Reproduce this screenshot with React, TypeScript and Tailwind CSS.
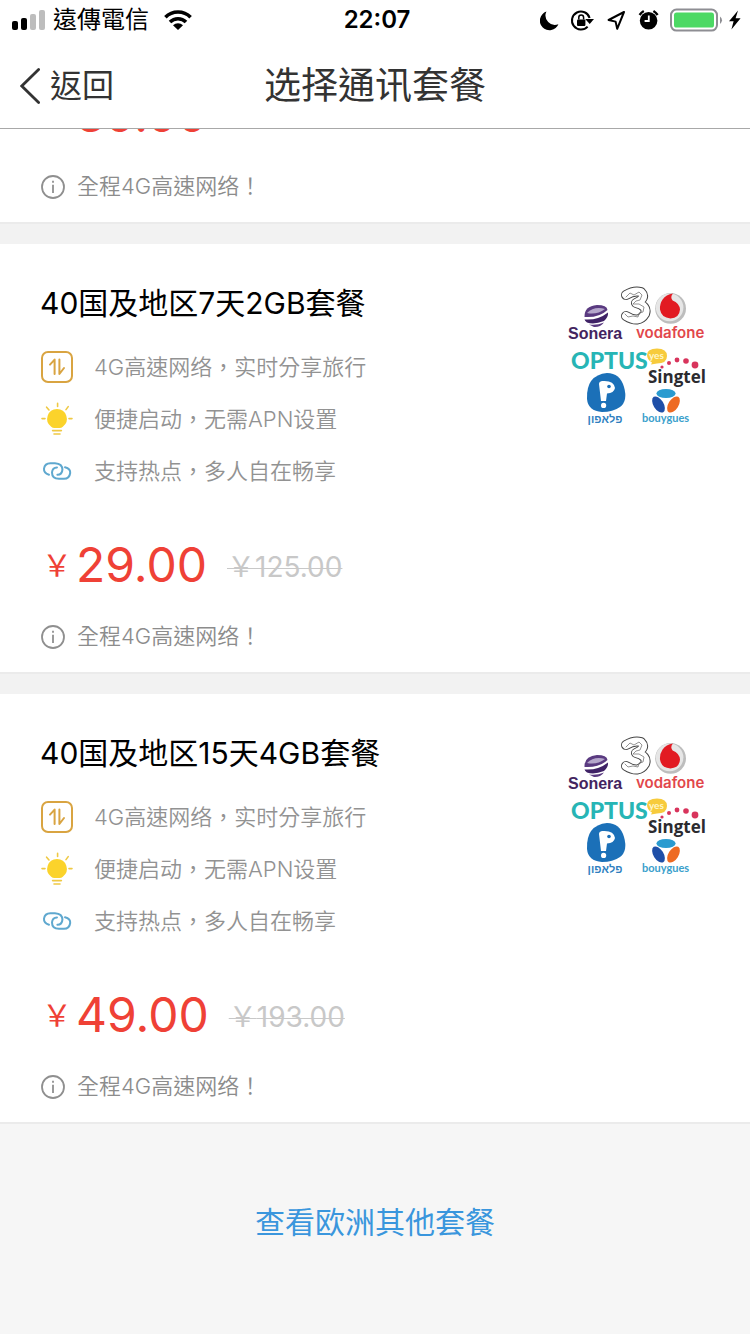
import React from "react";

type Plan = { title: string; price: string; original: string };

const plans: Plan[] = [
  { title: "40国及地区7天2GB套餐", price: "29.00", original: "125.00" },
  { title: "40国及地区15天4GB套餐", price: "49.00", original: "193.00" },
];

function Signal() {
  return (
    <svg width="34" height="22" viewBox="0 0 34 22" aria-hidden="true">
      <rect x="0" y="12" width="6" height="9" rx="2" fill="#000" />
      <rect x="9" y="9" width="6" height="12" rx="2" fill="#000" />
      <rect x="18" y="5" width="6" height="16" rx="2" fill="#bdbdbd" />
      <rect x="27" y="1" width="6" height="20" rx="2" fill="#bdbdbd" />
    </svg>
  );
}

function Wifi() {
  return (
    <svg width="28" height="20" viewBox="0 0 28 20" aria-hidden="true">
      <g fill="none" stroke="#000" strokeWidth="3.6">
        <path d="M1.4 7.2 A18 18 0 0 1 26.6 7.2" />
        <path d="M6 12 A11.4 11.4 0 0 1 22 12" />
      </g>
      <path d="M9 15.2 A7.2 7.2 0 0 1 19 15.2 L14 20 Z" fill="#000" />
    </svg>
  );
}

function StatusIcons() {
  return (
    <svg width="202" height="26" viewBox="0 0 202 26" aria-hidden="true">
      {/* do not disturb */}
      <path d="M6.4 4.6 A9.6 9.6 0 1 0 18.4 17.2 A9.4 9.4 0 0 1 6.4 4.6 Z" fill="#000" />
      {/* rotation lock */}
      <path d="M47.6 19.6 A9 9 0 1 1 49.6 11" fill="none" stroke="#000" strokeWidth="2" />
      <path d="M45.2 12 H54 L49.7 17 Z" fill="#000" />
      <rect x="37" y="12.4" width="8.4" height="6.6" rx="1" fill="#000" />
      <path d="M38.8 12.6 V10.4 a2.4 2.4 0 0 1 4.8 0 V12.6" fill="none" stroke="#000" strokeWidth="1.5" />
      {/* location */}
      <path d="M84 5 L68.6 13 L75.6 14.6 L77.2 21.8 Z" fill="none" stroke="#000" strokeWidth="2" strokeLinejoin="round" />
      {/* alarm */}
      <circle cx="108.6" cy="13.8" r="8.8" fill="#000" />
      <path d="M108.8 8.4 V14 H104.6" fill="none" stroke="#fff" strokeWidth="1.8" />
      <path d="M99.6 8 A13 13 0 0 1 103.8 4 M113.4 4 A13 13 0 0 1 117.6 8" fill="none" stroke="#000" strokeWidth="2.4" />
      {/* battery */}
      <rect x="131" y="2.6" width="46" height="21" rx="5.5" fill="#fff" stroke="#8e8e93" strokeWidth="2" />
      <rect x="134" y="5.6" width="40" height="15" rx="2.6" fill="#4cd964" />
      <path d="M180 9.4 a4.6 4.6 0 0 1 0 7.6 Z" fill="#8e8e93" />
      <path d="M198 3.6 L189 14.2 H193.6 L191.4 22.4 L200.6 11.2 H195.6 Z" fill="#000" />
    </svg>
  );
}

function DataIcon() {
  return (
    <svg width="34" height="34" viewBox="0 0 34 34" fill="none" stroke="#d9a441" strokeWidth="2" strokeLinecap="round" strokeLinejoin="round" aria-hidden="true">
      <rect x="2" y="2" width="30" height="30" rx="6" />
      <path d="M10 14.6 L14.6 9.6 V24" />
      <path d="M19.4 9.6 V24 L24 18" />
    </svg>
  );
}

function BulbIcon() {
  return (
    <svg width="34" height="34" viewBox="0 0 34 34" aria-hidden="true">
      <path d="M17 7 a9.8 9.8 0 0 1 5.8 17.7 q-1.4 1.3 -3.2 1.3 h-5.2 q-1.8 0 -3.2 -1.3 A9.8 9.8 0 0 1 17 7 Z" fill="#fbd32b" />
      <g stroke="#efc944" strokeWidth="1.6" strokeLinecap="round">
        <path d="M17.6 1.4 V4.4 M6.6 5.2 L9 8 M28.2 4.6 L26 7.6 M2 16.6 H5 M29 16.6 H32" />
        <path d="M12.6 28.6 H21.4 M14 32 H20" />
      </g>
    </svg>
  );
}

function LinkIcon() {
  return (
    <svg width="34" height="34" viewBox="0 0 34 34" fill="none" stroke="#5fa8cf" strokeWidth="2" strokeLinecap="round" aria-hidden="true">
      <path d="M9 20.8 Q3.6 19 4 14.6 Q4.8 9.2 10.4 9.2 H15 Q22.4 9.6 22.4 15.6 Q22.2 20.6 17.4 20.8" />
      <path d="M25 13.2 Q30.6 14.6 30.2 19 Q29.4 24.8 24 24.8 H19 Q12 24.6 12 18.4 Q12.4 13.6 17 13.4" />
    </svg>
  );
}

function InfoIcon() {
  return (
    <svg width="26" height="26" viewBox="0 0 26 26" fill="none" stroke="#8f8f8f" strokeWidth="1.8" aria-hidden="true">
      <circle cx="13" cy="13" r="11" />
      <path d="M13 10.8 V19" />
      <path d="M13 6.8 V8.8" />
    </svg>
  );
}

function Carriers() {
  return (
    <svg className="mt-[41px] shrink-0" width="140" height="144" viewBox="0 0 140 144" role="img" aria-label="运营商">
      {/* Sonera */}
      <g>
        <path d="M18.5 32 Q18 21 31 20 Q41 20 41.5 25 Q33 33 18.5 32 Z" fill="#5a3a80" />
        <path d="M18.5 34.500 Q32 35.500 42 27.500 Q42.500 32 38 36 Q28 40 21 37.500 Q19 36 18.500 34.500 Z" fill="#3f2266" />
        <path d="M23 39.500 Q31 40.500 38 37.500 Q34 42.500 28 42 Z" fill="#5a3a80" />
        <path d="M21 28 Q28 21 39 24 Q31 30 21 28 Z" fill="#b5a7cb" />
        <text x="2" y="54" fontSize="16" fontWeight="700" fill="#43245f" className="font-['Liberation_Sans',sans-serif]">Sonera</text>
      </g>
      {/* Three */}
      <g fill="none" strokeLinecap="round" strokeLinejoin="round">
        <path d="M60 10 Q68 5 75 7 Q81 13 70 18 Q82 21 79 29 Q73 39 60 31" stroke="#444" strokeWidth="10" />
        <path d="M60 10 Q68 5 75 7 Q81 13 70 18 Q82 21 79 29 Q73 39 60 31" stroke="#fff" strokeWidth="8" />
        <path d="M60 12 l4 -4 l4 2 l5 -3 l3 3 l-2 5 l-4 1 l-3 3 l6 0 l5 3 l-1 5 l-4 1 l-1 4 l-5 -1 l-5 1 l-3 -3" stroke="#777" strokeWidth="0.8" />
      </g>
      {/* Vodafone */}
      <g>
        <circle cx="104.6" cy="23.4" r="15.4" fill="#bdbdbd" />
        <circle cx="103.6" cy="22.4" r="13.8" fill="#e6e6e6" />
        <path d="M107 8.5 Q100 9.6 96.6 14.6 Q93.6 19 94 24.6 Q95.4 33 104.4 33.4 Q113.4 33 114 24.4 Q113.4 18 106.6 15.4 Q103.8 12 107 8.5 Z" fill="#e21a22" />
        <text x="70" y="53" fontSize="15" fontWeight="600" fill="#e2474b" className="font-[Inter,sans-serif]">vodafone</text>
      </g>
      {/* Optus */}
      <g>
        <text x="5" y="84" fontSize="23" fontWeight="900" fill="#27b5b5" className="font-[Lato,sans-serif]">OPTUS</text>
        <path d="M81 70 Q81 63.5 91 63.5 Q101 63.5 101 71 Q101 78.5 91 78.5 L85 79.5 L86 77.5 Q81 75 81 70 Z" fill="#f7cb3c" />
        <text x="83" y="74" fontSize="10" fontWeight="700" fill="#fff6c8" className="font-[Lato,sans-serif]">yes</text>
      </g>
      {/* Singtel */}
      <g>
        <g fill="#d8345c">
          <circle cx="96" cy="82" r="1.6" />
          <circle cx="103" cy="78" r="2" />
          <circle cx="111" cy="75" r="2.4" />
          <circle cx="120" cy="76" r="2.8" />
          <circle cx="129" cy="80" r="3.4" />
        </g>
        <text x="82" y="98" fontSize="17" fontWeight="700" fill="#2b2b2f" className="font-['Open_Sans',sans-serif]">Singtel</text>
      </g>
      {/* Pelephone */}
      <g>
        <path d="M41 88 Q54 88 58 102 Q62 116 54 122 Q47 127 36 127 Q22 126 21 114 Q20 90 41 88 Z" fill="#1b70b8" />
        <path d="M36 96 Q48 95 49 103 Q48 108 41 108.5 L40 116 H35 L33 99 Q33 96.5 36 96 Z" fill="#fff" />
        <circle cx="43" cy="101.5" r="1.8" fill="#1b70b8" />
        <circle cx="37.6" cy="120.4" r="2.6" fill="#fff" />
        <text x="39" y="138" textAnchor="middle" fontSize="11" fontWeight="700" fill="#2f7fbf" className="font-['Liberation_Sans',sans-serif]">פלאפון</text>
      </g>
      {/* Bouygues */}
      <g>
        <ellipse cx="100" cy="108.5" rx="9.6" ry="4.6" fill="#2a9bd0" />
        <ellipse cx="92.5" cy="119.5" rx="9" ry="5" transform="rotate(58 92.5 119.5)" fill="#1f4fa8" />
        <ellipse cx="107.5" cy="119.5" rx="9" ry="5" transform="rotate(-58 107.5 119.5)" fill="#ee6a22" />
        <text x="76" y="137" fontSize="11" fontWeight="700" fill="#3aa0cc" className="font-[Lato,sans-serif]">bouygues</text>
      </g>
    </svg>
  );
}

function Price({ price, original }: { price: string; original?: string }) {
  return (
    <div className="flex h-[72px] shrink-0 items-center">
      <span className="flex items-center text-[#ef4136]">
        <span className="w-9 pl-[2px] text-[30px] leading-none">￥</span>
        <span className="text-[48px] leading-none">{price}</span>
      </span>
      {original && (
        <del className="ml-5 pt-1 text-[28px] text-[#c8c8c8] decoration-1">￥{original}</del>
      )}
    </div>
  );
}

function Note() {
  return (
    <p className="flex h-[71px] shrink-0 items-center gap-[11px] text-[22px] font-[350] text-[#8c8c8c]">
      <InfoIcon />
      全程4G高速网络！
    </p>
  );
}

function Feature({ icon, children }: { icon: React.ReactNode; children: React.ReactNode }) {
  return (
    <li className="flex h-[52px] items-center gap-5">
      {icon}
      {children}
    </li>
  );
}

function PlanCard({ plan }: { plan: Plan }) {
  return (
    <article className="flex justify-between bg-white pr-11 pl-10">
      <div className="pt-9">
        <h2 className="text-[30px] leading-[46px] text-black">{plan.title}</h2>
        <ul className="mt-[15px] text-[22px] font-[350] text-[#929292]">
          <Feature icon={<DataIcon />}>4G高速网络，实时分享旅行</Feature>
          <Feature icon={<BulbIcon />}>便捷启动，无需APN设置</Feature>
          <Feature icon={<LinkIcon />}>支持热点，多人自在畅享</Feature>
        </ul>
        <div className="mt-8">
          <Price price={plan.price} original={plan.original} />
        </div>
        <Note />
      </div>
      <Carriers />
    </article>
  );
}

export default function App() {
  return (
    <div lang="zh-Hant" className="flex min-h-screen flex-col bg-[#f6f6f6] font-[Inter,'Noto_Sans_CJK_TC',sans-serif]">
      <header className="border-b border-[#a8a8a8] bg-white">
        <div className="grid h-10 grid-cols-[1fr_auto_1fr] items-center pr-2 pl-3">
          <div className="flex items-center gap-[7px] text-2xl text-black">
            <Signal />
            <span>遠傳電信</span>
            <span className="pl-2">
              <Wifi />
            </span>
          </div>
          <time className="text-[24px] font-semibold text-black">22:07</time>
          <div className="flex justify-end">
            <StatusIcons />
          </div>
        </div>
        <div className="grid h-[88px] grid-cols-[1fr_auto_1fr] items-center px-5 pt-1 text-[#333]">
          <button type="button" className="flex items-center gap-[10px] text-[32px]">
            <svg width="20" height="36" viewBox="0 0 20 36" fill="none" stroke="#333" strokeWidth="2.8" strokeLinecap="round" aria-hidden="true">
              <path d="M18.6 1.6 L1.8 18 L18.6 34.4" />
            </svg>
            返回
          </button>
          <h1 className="text-[37px]">选择通讯套餐</h1>
        </div>
      </header>
      <main className="flex flex-col">
        <section className="flex h-[93px] flex-col justify-end overflow-hidden bg-white px-10">
          <Price price="39.00" />
          <Note />
        </section>
        {plans.map((plan) => (
          <section key={plan.title}>
            <div className="h-[22px] border-t-2 border-[#ebebeb] bg-[#f2f2f2]" />
            <PlanCard plan={plan} />
          </section>
        ))}
        <div className="flex justify-center border-t-2 border-[#ebebeb] pt-[75px]">
          <a href="#europe" className="text-[30px] leading-[46px] text-[#3a96dd]">
            查看欧洲其他套餐
          </a>
        </div>
      </main>
    </div>
  );
}
